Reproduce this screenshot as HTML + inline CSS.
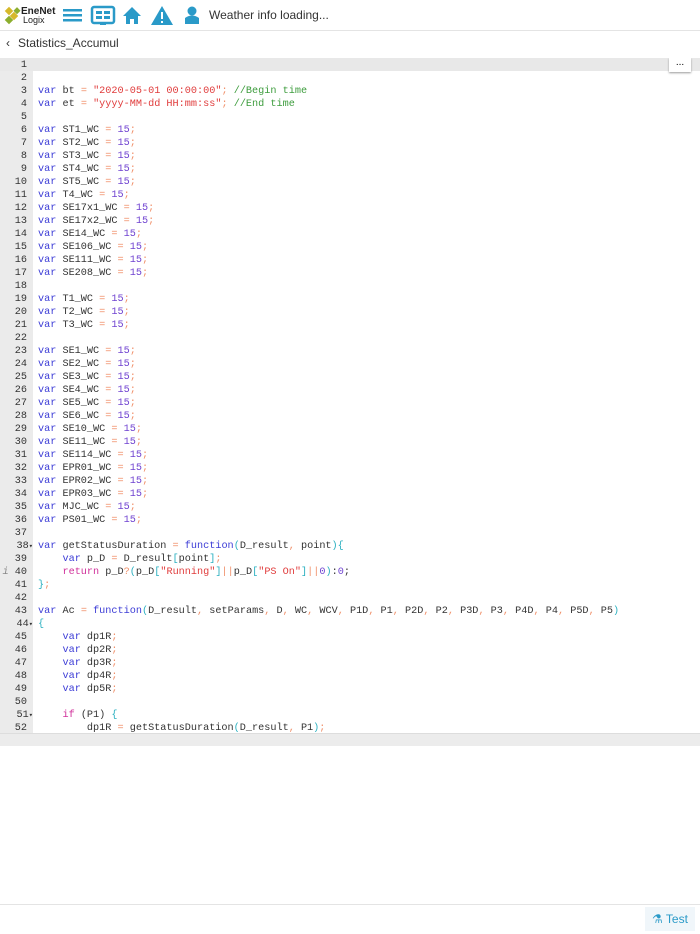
<!DOCTYPE html>
<html><head><meta charset="utf-8"><style>
body{margin:0;width:700px;height:934px;background:#fff;font-family:"Liberation Sans",sans-serif;position:relative;overflow:hidden}
.hdr{position:absolute;top:0;left:0;width:700px;height:30px;border-bottom:1px solid #e4e4e4}
.bc{position:absolute;top:36px;left:6px;font-size:12px;color:#333}
.ed{position:absolute;top:58px;left:0;width:700px;height:675px;overflow:hidden}
.gut{position:absolute;left:0;top:0;width:33px;height:675px;background:#ebebeb}
.l{position:absolute;left:0;height:13px;line-height:13px;font-family:"Liberation Mono",monospace;font-size:10.2px;white-space:pre;color:#333}
.n{width:27px;text-align:right;color:#333}
.c{left:38px}
.k{color:#3c3cd6}.s{color:#e03c3c}.m{color:#3d9c3d}.d{color:#6f42d0}.o{color:#f0906a}.p{color:#2bb0c0}.r{color:#d0309a}
.hs{position:absolute;top:733px;left:0;width:700px;height:12px;background:#ececec;border-top:1px solid #ddd}
.ft{position:absolute;top:904px;left:0;width:700px;border-top:1px solid #e4e4e4}
</style></head><body>
<div class="hdr">
<svg width="700" height="30" style="position:absolute;left:0;top:0">
<g fill="#d6b82a"><rect x="6" y="8" width="6" height="6" transform="rotate(45 9 11)"/><rect x="11" y="13" width="6" height="6" transform="rotate(45 14 16)"/><rect x="6" y="17" width="6" height="6" transform="rotate(45 9 20)" fill="#8cae2e"/><rect x="15" y="8" width="5" height="5" transform="rotate(45 17 10)" fill="#8cae2e"/></g>
<text x="21" y="14" font-size="10" font-weight="bold" fill="#222" font-family="Liberation Sans">EneNet</text>
<text x="23" y="23" font-size="9" fill="#222" font-family="Liberation Sans">Logix</text>
<g fill="#2a9ac8">
<rect x="63" y="9" width="19" height="2.5"/><rect x="63" y="14" width="19" height="2.5"/><rect x="63" y="19" width="19" height="2.5"/>
<rect x="92" y="7" width="22" height="16" rx="2" fill="none" stroke="#2a9ac8" stroke-width="2.5"/><rect x="96" y="11" width="6" height="3"/><rect x="104" y="11" width="6" height="3"/><rect x="96" y="16" width="6" height="3"/><rect x="104" y="16" width="6" height="3"/><rect x="100" y="23" width="6" height="2"/>
<path d="M123 16 L132 7 L141 16 L138 16 L138 24 L134 24 L134 19 L130 19 L130 24 L126 24 L126 16Z"/>
<path d="M162 6 L173 25 L151 25Z"/>
<path d="M185 18 Q192 13 199 18 L199 24 L185 24Z"/><circle cx="192" cy="11" r="4.5"/>
</g>
<rect x="161" y="12" width="2" height="7" fill="#fff"/><rect x="161" y="21" width="2" height="2" fill="#fff"/>
<text x="209" y="19" font-size="12" fill="#333" font-family="Liberation Sans">Weather info loading...</text>
</svg></div>
<div class="bc"><span style="margin-right:8px">‹</span>Statistics_Accumul</div>
<div class="ed">
<div class="gut"></div>
<div style="position:absolute;left:0;top:0;width:700px;height:13px;background:#e8e8e8"></div>
<div style="position:absolute;left:669px;top:0;width:22px;height:14px;background:#fff;box-shadow:0 1px 2px #999;font-size:10px;text-align:center;line-height:10px">...</div>
<div id="code"></div>
</div>
<div class="hs"></div>
<div class="ft"></div>
<div style="position:absolute;left:645px;top:907px;width:50px;height:24px;background:#f0f6fa;color:#2a9ac8;font-size:12px;line-height:24px;text-align:center">⚗ Test</div>
<script>
var L=["","",
'<span class="k">var</span> bt <span class="o">=</span> <span class="s">"2020-05-01 00:00:00"</span><span class="o">;</span> <span class="m">//Begin time</span>',
'<span class="k">var</span> et <span class="o">=</span> <span class="s">"yyyy-MM-dd HH:mm:ss"</span><span class="o">;</span> <span class="m">//End time</span>',""];
function v(n){return '<span class="k">var</span> '+n+' <span class="o">=</span> <span class="d">15</span><span class="o">;</span>';}
["ST1_WC","ST2_WC","ST3_WC","ST4_WC","ST5_WC","T4_WC","SE17x1_WC","SE17x2_WC","SE14_WC","SE106_WC","SE111_WC","SE208_WC"].forEach(function(x){L.push(v(x))});
L.push("");["T1_WC","T2_WC","T3_WC"].forEach(function(x){L.push(v(x))});L.push("");
["SE1_WC","SE2_WC","SE3_WC","SE4_WC","SE5_WC","SE6_WC","SE10_WC","SE11_WC","SE114_WC","EPR01_WC","EPR02_WC","EPR03_WC","MJC_WC","PS01_WC"].forEach(function(x){L.push(v(x))});
L.push("");
var c='<span class="o">,</span>';
L.push('<span class="k">var</span> getStatusDuration <span class="o">=</span> <span class="k">function</span><span class="p">(</span>D_result'+c+' point<span class="p">){</span>');
L.push('    <span class="k">var</span> p_D <span class="o">=</span> D_result<span class="p">[</span>point<span class="p">]</span><span class="o">;</span>');
L.push('    <span class="r">return</span> p_D<span class="o">?</span><span class="p">(</span>p_D<span class="p">[</span><span class="s">"Running"</span><span class="p">]</span><span class="o">||</span>p_D<span class="p">[</span><span class="s">"PS On"</span><span class="p">]</span><span class="o">||</span><span class="d">0</span><span class="p">)</span>:<span class="d">0</span>;');
L.push('<span class="p">}</span><span class="o">;</span>');L.push("");
L.push('<span class="k">var</span> Ac <span class="o">=</span> <span class="k">function</span><span class="p">(</span>D_result'+c+' setParams'+c+' D'+c+' WC'+c+' WCV'+c+' P1D'+c+' P1'+c+' P2D'+c+' P2'+c+' P3D'+c+' P3'+c+' P4D'+c+' P4'+c+' P5D'+c+' P5<span class="p">)</span>');
L.push('<span class="p">{</span>');
for(var i=1;i<=5;i++)L.push('    <span class="k">var</span> dp'+i+'R<span class="o">;</span>');
L.push("");
L.push('    <span class="r">if</span> (P1) <span class="p">{</span>');
L.push('        dp1R <span class="o">=</span> getStatusDuration<span class="p">(</span>D_result'+c+' P1<span class="p">)</span><span class="o">;</span>');
var h="";
for(var i=0;i<L.length;i++){var y=i*13+1;var n=i+1;var num=(n==40?'<span style="color:#888;font-style:italic">i </span>':'')+n+((n==38||n==44||n==51)?'<span style="font-size:7px">▾</span>':'');
h+='<div class="l n" style="top:'+y+'px;'+((n==38||n==44||n==51)?'width:33px;text-align:right':'')+'">'+num+'</div><div class="l c" style="top:'+y+'px">'+L[i]+'</div>';}
document.getElementById("code").innerHTML=h;
</script>
</body></html>
